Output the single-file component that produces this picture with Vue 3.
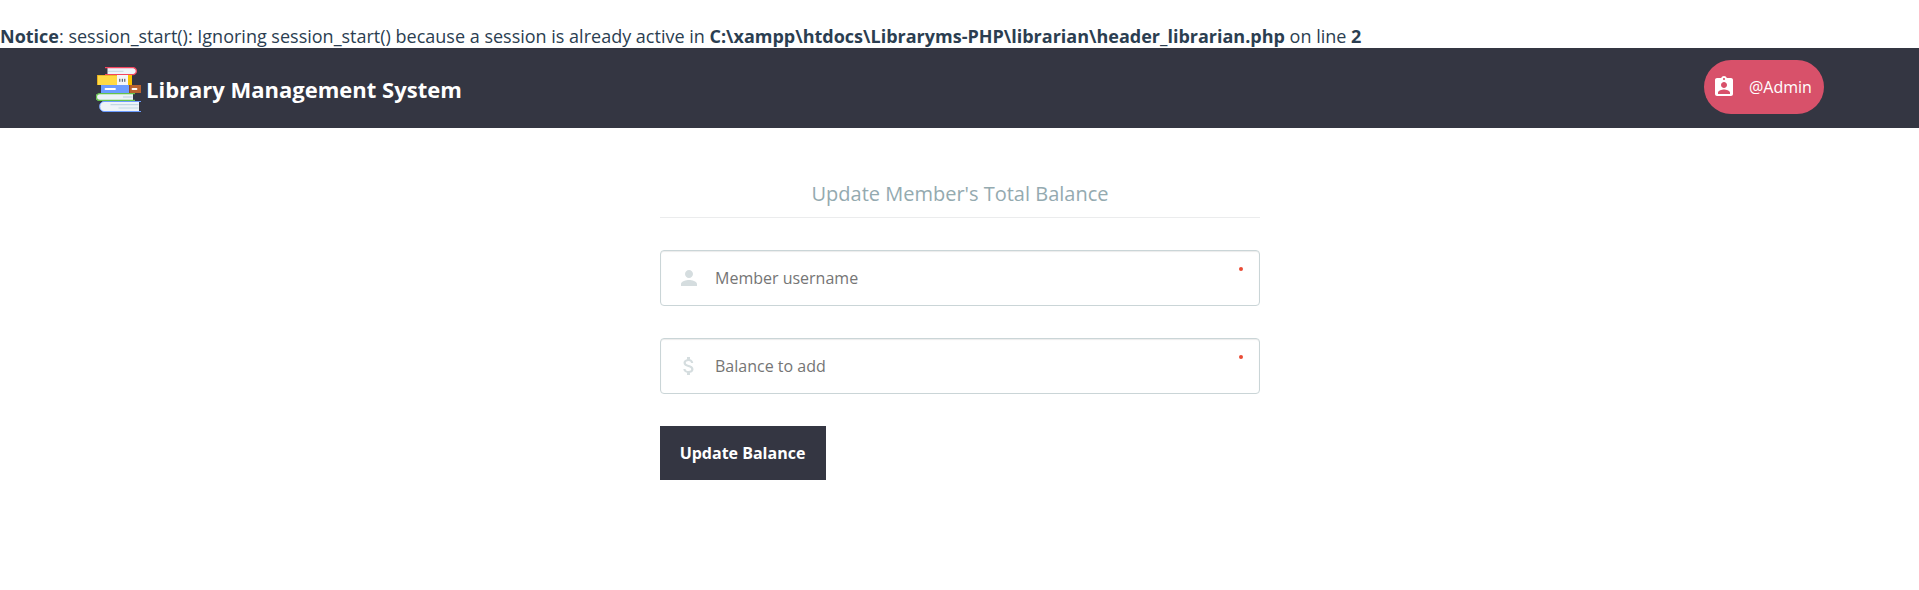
<script setup>
const fields = [
  {
    name: 'username',
    label: 'Member username',
    icon: 'M12 12c2.21 0 4-1.79 4-4s-1.79-4-4-4-4 1.79-4 4 1.79 4 4 4zm0 2c-2.67 0-8 1.34-8 4v2h16v-2c0-2.66-5.33-4-8-4z',
  },
  {
    name: 'balance',
    label: 'Balance to add',
    icon: 'M11.8 10.9c-2.27-.59-3-1.2-3-2.15 0-1.09 1.01-1.85 2.7-1.85 1.78 0 2.44.85 2.5 2.1h2.21c-.07-1.72-1.12-3.3-3.21-3.81V3h-3v2.16c-1.94.42-3.5 1.68-3.5 3.61 0 2.31 1.91 3.46 4.7 4.13 2.5.6 3 1.48 3 2.41 0 .69-.49 1.79-2.7 1.79-2.06 0-2.87-.92-2.98-2.1h-2.2c.12 2.19 1.76 3.42 3.68 3.83V21h3v-2.15c1.95-.37 3.5-1.5 3.5-3.55 0-2.84-2.43-3.81-4.7-4.4z',
  },
]
</script>

<template>
  <div class="page">
    <div class="notice">
      <b>Notice</b>: session_start(): Ignoring session_start() because a session is already active in
      <b>C:\xampp\htdocs\Libraryms-PHP\librarian\header_librarian.php</b> on line <b>2</b>
    </div>
    <header class="header">
      <a class="brand">
        <svg class="books" viewBox="6 7 45 45">
          <path d="M17.500 7.700H43a4.600 3.600 0 0 1 0 7H17.500z" fill="#edf3f8" />
          <path d="M15 7.600H43.500a3.700 3.600 0 0 1 0 7H15" fill="none" stroke="#f4455f" stroke-width="1.100" />
          <path d="M18 11.300h15.500" stroke="#c5d6e2" stroke-width="1" />
          <path d="M7 15h35v10H7z" fill="#ffda44" />
          <path d="M38 15h4v10h-4z" fill="#f9c300" />
          <path d="M7 15h1v10H7zM7 15h20v.7H7z" fill="#e5ae20" />
          <path d="M27 15h11v10H27z" fill="#f4f5f8" />
          <path d="M29.800 18.800v3M32.300 18.800v3M34.800 18.800v3" stroke="#3d4653" stroke-width="1" />
          <path d="M11 25h28v8H11z" fill="#6c9cff" />
          <path d="M39 25h12v8H39z" fill="#b9632f" />
          <path d="M39 25h1v8h-1z" fill="#8c4d27" />
          <path d="M15.500 29h9.500M42.500 29h4" stroke="#fff" stroke-width="1.800" stroke-linecap="round" />
          <path d="M43 33.500H10a4.500 3.500 0 0 0 0 7h33z" fill="#edf3f8" />
          <path d="M45 33.600H10a3.500 3.400 0 0 0 0 6.800h35" fill="none" stroke="#65c44a" stroke-width="1.200" />
          <path d="M33 37h9.500" stroke="#c5d6e2" stroke-width="1.200" />
          <path d="M49 41.500H14a4.500 5 0 0 0 0 10h35z" fill="#edf3f8" />
          <path d="M51 41.500H14a4.300 5 0 0 0 0 10h37" fill="none" stroke="#6c9cff" stroke-width="1" />
          <path d="M20.500 44.700h28M28.500 48h20" stroke="#c2d7e4" stroke-width="1.200" />
        </svg>
        <span class="brand-name">Library Management System</span>
      </a>
      <a class="account">
        <svg class="glyph" viewBox="0 0 24 24">
          <path d="M19 3h-4.180C14.400 1.840 13.300 1 12 1c-1.300 0-2.400.84-2.820 2H5c-1.100 0-2 .9-2 2v14c0 1.100.9 2 2 2h14c1.100 0 2-.9 2-2V5c0-1.100-.9-2-2-2zm-7 0c.55 0 1 .45 1 1s-.45 1-1 1-1-.45-1-1 .45-1 1-1zm0 4c1.660 0 3 1.340 3 3s-1.340 3-3 3-3-1.340-3-3 1.340-3 3-3zm6 12H6v-1.400c0-2 4-3.100 6-3.100s6 1.100 6 3.100V19z" />
        </svg>
        <span>@Admin</span>
      </a>
    </header>
    <form class="form" @submit.prevent>
      <h1 class="legend">Update Member's Total Balance</h1>
      <label v-for="f in fields" :key="f.name" class="field">
        <svg class="glyph" viewBox="0 0 24 24"><path :d="f.icon" /></svg>
        <input class="input" type="text" :name="f.name" :placeholder="f.label" />
        <i class="required"></i>
      </label>
      <button class="submit" type="submit">Update Balance</button>
    </form>
  </div>
</template>

<style scoped>
.page {
  box-sizing: border-box;
  min-height: 590px;
  padding-top: 24px;
  background: #fff;
  color: #2b3e51;
  font: 16px/24px "Open Sans", "Noto Sans", sans-serif;
}
.notice {
  height: 24px;
  font-size: 18px;
  white-space: nowrap;
}
.header {
  box-sizing: border-box;
  height: 80px;
  padding: 12px 95px 0 96px;
  display: flex;
  justify-content: space-between;
  align-items: flex-start;
  background: #343642;
  color: #fff;
}
.brand {
  display: flex;
  align-items: center;
  gap: 5px;
  margin-top: 7px;
}
.books {
  width: 45px;
  height: 45px;
}
.brand-name {
  padding-bottom: 2px;
  font-size: 22px;
  font-weight: 700;
}
.glyph {
  width: 24px;
  height: 24px;
  flex: none;
  fill: currentColor;
}
.account {
  box-sizing: border-box;
  width: 120px;
  height: 54px;
  padding-left: 8px;
  display: flex;
  align-items: center;
  gap: 13px;
  border-radius: 27px;
  background: #d8516a;
}
.form {
  width: 600px;
  margin: 48px auto 0;
}
.legend {
  box-sizing: border-box;
  height: 42px;
  margin: 0 0 32px;
  padding: 3px 0 0 1px;
  border-bottom: 1px solid #ebeced;
  color: #94aab0;
  font-size: 20px;
  font-weight: 400;
  line-height: 30px;
  text-align: center;
}
.field {
  box-sizing: border-box;
  height: 56px;
  margin-bottom: 32px;
  padding: 0 16px;
  display: flex;
  align-items: center;
  gap: 14px;
  border: 1px solid #cad5d7;
  border-radius: 4px;
  box-shadow: inset 0 1px 1px rgba(0, 0, 0, 0.08);
  color: #d5dddf;
}
.input {
  flex: 1;
  min-width: 0;
  padding: 0 0 0 0.5px;
  border: 0;
  outline: 0;
  background: transparent;
  color: #2b3e51;
  font: inherit;
}
.input::placeholder {
  color: #757575;
}
.required {
  align-self: flex-start;
  width: 4px;
  height: 4px;
  margin: 16px 0 0;
  border-radius: 50%;
  background: #e94b35;
}
.submit {
  display: block;
  width: 166px;
  height: 54px;
  padding: 0;
  border: 0;
  background: #343642;
  color: #fff;
  font: inherit;
  font-weight: 700;
}
</style>
